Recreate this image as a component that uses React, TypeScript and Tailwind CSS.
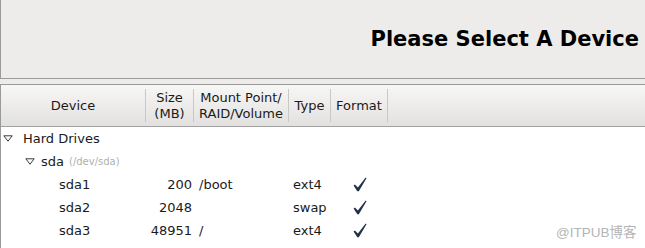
import React from "react";

const Tri = () => (
  <svg width="10" height="7" viewBox="0 0 10 7" className="shrink-0">
    <polygon points="0.8,0.8 9.2,0.8 5,6.2" fill="none" stroke="#3a3a3a" strokeWidth="1" />
  </svg>
);

const Check = () => (
  <svg width="14" height="15" viewBox="0 0 14 15" className="shrink-0">
    <path d="M0.6 8.6 L1.9 7.6 L4.9 10.6 L12.7 0.6 L13.5 1.3 L5.8 14.2 L4.3 14.2 Z" fill="#24304a" />
  </svg>
);

const Sep = () => <div className="w-px h-[33px] bg-[#c9c8c6] self-center shrink-0" />;

const rows = [
  { name: "sda1", size: "200", mount: "/boot", type: "ext4" },
  { name: "sda2", size: "2048", mount: "", type: "swap" },
  { name: "sda3", size: "48951", mount: "/", type: "ext4" },
];

export default function App() {
  return (
    <div className="relative w-[645px] h-[248px] overflow-hidden bg-[#edeceb] font-['DejaVu_Sans',sans-serif] text-[13px] text-[#1a1a1a]">
      <div className="h-[79px] border-l border-b border-[#9a9a9a] flex items-center justify-end pr-[6px]">
        <div className="text-[21px] font-bold text-black leading-none pt-[1px]">Please Select A Device</div>
      </div>
      <div className="mt-[5px] border-l border-t border-[#9a9a9a] bg-white h-[200px]">
        <div className="flex h-[42px] border-b border-[#a3a3a3] bg-gradient-to-b from-[#f7f7f6] to-[#e2e1df] leading-[16px]">
          <div className="flex w-[145px]">
            <div className="flex-1 flex items-center justify-center">Device</div>
            <Sep />
          </div>
          <div className="flex w-[48px]">
            <div className="flex-1 flex items-center justify-center text-center">Size<br />(MB)</div>
            <Sep />
          </div>
          <div className="flex w-[95px]">
            <div className="flex-1 flex items-center justify-center text-center">Mount Point/<br />RAID/Volume</div>
            <Sep />
          </div>
          <div className="flex w-[42px]">
            <div className="flex-1 flex items-center justify-center">Type</div>
            <Sep />
          </div>
          <div className="flex w-[57px]">
            <div className="flex-1 flex items-center justify-center">Format</div>
            <Sep />
          </div>
        </div>
        <div className="flex flex-col">
          <div className="h-[23px] flex items-center pl-[2px]">
            <Tri />
            <span className="ml-[10px]">Hard Drives</span>
          </div>
          <div className="h-[23px] flex items-center pl-[24px]">
            <Tri />
            <span className="ml-[6px]">sda</span>
            <span className="ml-[5px] text-[10px] text-[#b0b0b0]">(/dev/sda)</span>
          </div>
          {rows.map((r) => (
            <div key={r.name} className="h-[23px] flex items-center">
              <div className="w-[145px] pl-[58px]">{r.name}</div>
              <div className="w-[48px] text-right pr-[2px]">{r.size}</div>
              <div className="w-[95px] pl-[5px]">{r.mount}</div>
              <div className="w-[42px] pl-[4px]">{r.type}</div>
              <div className="w-[57px] flex justify-center pl-[1px]">
                <Check />
              </div>
            </div>
          ))}
        </div>
      </div>
      <div className="absolute left-[556px] top-[225px] text-[13.5px] leading-[16px] text-[#b5b5b5] font-['Liberation_Sans','Noto_Sans_CJK_SC',sans-serif]">
        @ITPUB博客
      </div>
    </div>
  );
}
